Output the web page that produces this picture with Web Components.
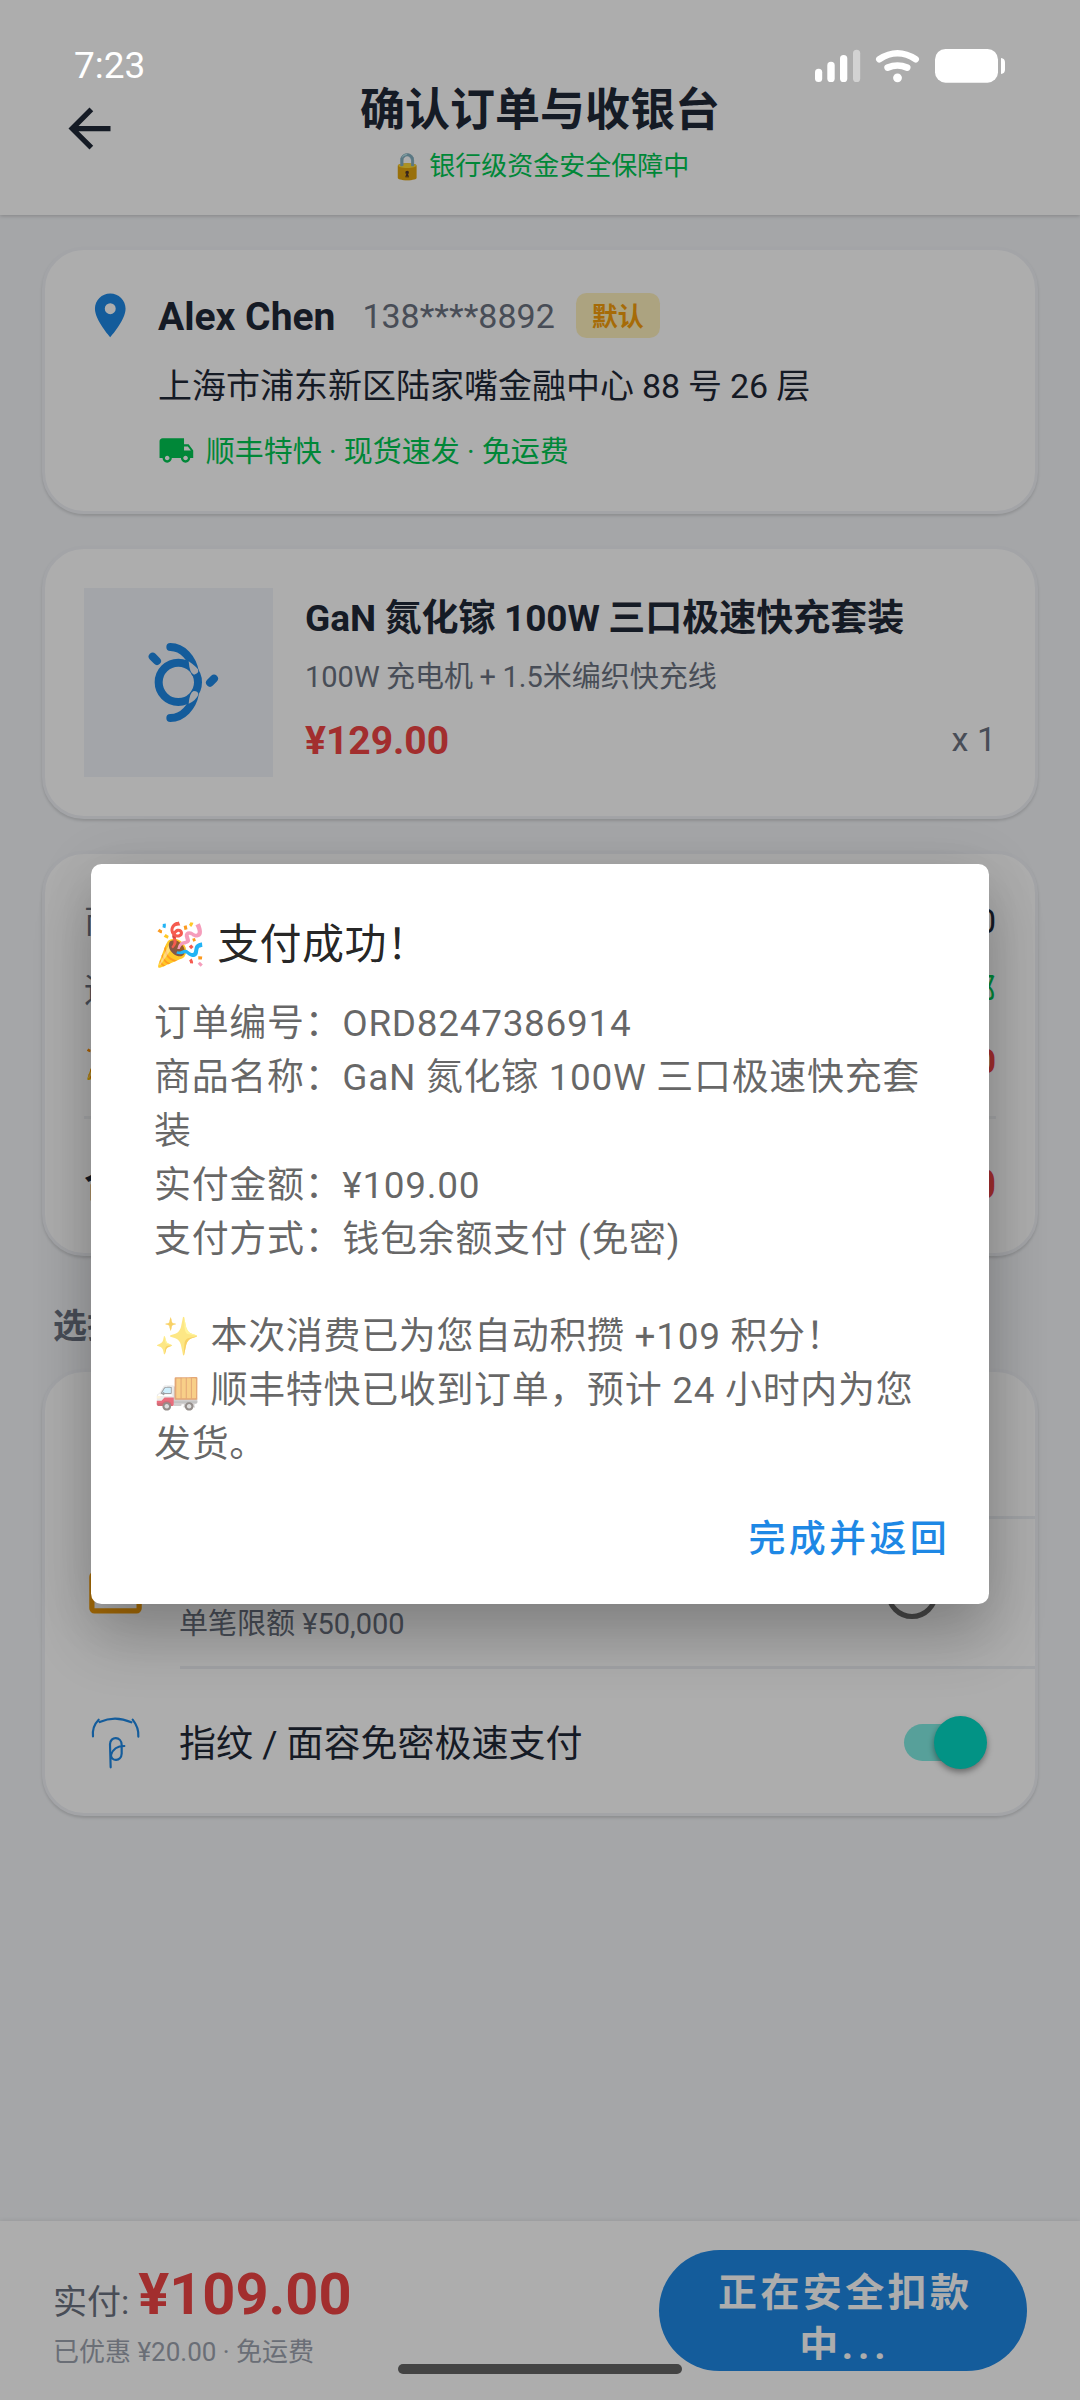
<!DOCTYPE html>
<html lang="zh-CN">
<head>
<meta charset="utf-8">
<title>确认订单与收银台</title>
<style>
html,body{margin:0;padding:0}
body{width:1080px;height:2400px;overflow:hidden;font-family:Roboto,"Noto Sans CJK SC",sans-serif;color:#1f2937}
</style>
</head>
<body>
<checkout-screen></checkout-screen>
<script>
const define=(name,html)=>{
  const t=document.createElement('template');
  t.innerHTML='<style>*{box-sizing:border-box}svg{display:block;flex:none}</style>'+html;
  customElements.define(name,class extends HTMLElement{
    constructor(){super();this.attachShadow({mode:'open'}).appendChild(t.content.cloneNode(true));}
  });
};

define('status-bar',`<style>:host{position:absolute;top:0;left:0;width:1080px;height:130px;display:flex;justify-content:space-between;padding:43px 74px 0 74px;color:#fff;z-index:5}
span{font-size:37px;line-height:44px;height:44px;margin-top:1px}svg{margin-top:3px}</style>
<span>7:23</span>
<svg width="192" height="40" viewBox="814 46 192 40" fill="#fff">
<rect x="815" y="68.7" width="7.2" height="13.3" rx="3.5"/><rect x="827.3" y="61.8" width="7.4" height="20.2" rx="3.6"/><rect x="840" y="55" width="7.3" height="27" rx="3.6"/><rect x="853" y="49.7" width="7.2" height="32.3" rx="3.6" opacity=".45"/>
<path d="M879.3 59.2Q897.5 47.3 915.7 59.2" fill="none" stroke="#fff" stroke-width="6.6" stroke-linecap="round"/>
<path d="M887.6 67.6Q897.5 63.4 907.2 67.6" fill="none" stroke="#fff" stroke-width="6.6" stroke-linecap="round"/>
<circle cx="897.5" cy="77.8" r="4.4"/>
<rect x="935" y="49" width="63" height="33.7" rx="10.5"/><path d="M1001 58q4 .4 4 4.5v7q0 4-4 4.5z"/></svg>`);

define('top-bar',`<style>:host{display:flex;width:1080px;height:215px;background:#fff;box-shadow:0 1px 4px rgba(0,0,0,.2);padding:0 58px;position:relative;align-items:flex-start}
svg{margin-top:97px}.t{flex:1;margin-right:63px;display:flex;flex-direction:column;align-items:center}
h1{margin:81px 0 0;font-size:45px;line-height:60px;font-weight:700}p{margin:8px 0 0;font-size:26px;line-height:34px;color:#00c853}</style>
<svg width="63" height="63" viewBox="0 0 24 24" fill="#1f2937"><path d="M20 11H7.83l5.59-5.59L12 4l-8 8 8 8 1.41-1.41L7.83 13H20v-2z"/></svg>
<div class="t"><h1>确认订单与收银台</h1><p>🔒 银行级资金安全保障中</p></div>`);

define('ui-card',`<style>:host{display:block;width:996px;border:3px solid #f0f2f7;border-radius:42px;background:#fff;box-shadow:0 2px 3px rgba(0,0,0,.14)}</style><slot></slot>`);

define('address-info',`<style>:host{display:flex;height:261px;padding:39px}.c{margin-left:21.5px}
.n{display:flex;height:53px;align-items:center}b{font-size:39px;line-height:50px;margin-top:3px}
.p{font-size:34px;line-height:44px;color:#6b7280;margin:1px 0 0 27px}
.k{margin-left:21px;height:45px;padding:0 16px;border-radius:10.5px;background:#fef0bd;color:#f59e0b;font-weight:700;font-size:26px;line-height:48px}
.a{margin-top:19px;font-size:34px;line-height:50px;word-spacing:-.5px}.s{margin-top:21px;height:40px;display:flex;gap:11px;font-size:29px;line-height:41px;color:#00c853}</style>
<svg width="52.5" height="52.5" viewBox="0 0 24 24" fill="#1e88e5"><path d="M12 2C8.13 2 5 5.13 5 9c0 5.25 7 13 7 13s7-7.75 7-13c0-3.87-3.13-7-7-7zm0 9.5a2.5 2.5 0 0 1 0-5 2.5 2.5 0 0 1 0 5z"/></svg>
<div class="c"><div class="n"><b>Alex Chen</b><span class="p">138****8892</span><span class="k">默认</span></div>
<div class="a">上海市浦东新区陆家嘴金融中心 88 号 26 层</div>
<div class="s"><svg width="36.75" height="36.75" viewBox="0 0 24 24" fill="#00c853"><path d="M20 8h-3V4H3c-1.1 0-2 .9-2 2v11h2c0 1.66 1.34 3 3 3s3-1.34 3-3h6c0 1.66 1.34 3 3 3s3-1.34 3-3h2v-5l-3-4zM6 18.5c-.83 0-1.5-.67-1.5-1.5s.67-1.5 1.5-1.5 1.5.67 1.5 1.5-.67 1.5-1.5 1.5zm13.5-9l1.96 2.5H17V9.5h2.500zm-1.500 9c-.83 0-1.500-.67-1.500-1.500s.67-1.500 1.500-1.500 1.500.67 1.500 1.500-.67 1.500-1.500 1.500z"/></svg><span>顺丰特快 · 现货速发 · 免运费</span></div></div>`);

define('product-info',`<style>:host{display:flex;height:267px;padding:39px}
.i{width:189px;height:189px;background:#f0f3f9;display:flex;align-items:center;justify-content:center}
.c{flex:1;margin-left:32px;display:flex;flex-direction:column}
b{font-size:37px;line-height:50px;margin-top:6px;word-spacing:-.8px}.s{font-size:29px;line-height:40px;margin-top:13px;color:#6b7280;word-spacing:-.7px}
.p{display:flex;justify-content:space-between;line-height:50px;margin-top:19px;font-size:39px;font-weight:700;color:#ef4444}.p span{font-size:34px;font-weight:400;color:#6b7280;margin-top:-2px}</style>
<div class="i"><svg width="110" height="105" viewBox="0 0 330 315" style="margin-left:13px">
<g fill="none" stroke="#1e88e5" stroke-width="24" stroke-linecap="round"><circle cx="145" cy="157" r="59"/><path d="M121 51C158 51 188 85 195 127M121 264C158 264 188 230 195 190"/><path d="M68 80L81 93M240 158L252 146"/></g>
<path d="M176 94Q196 108 204 118Q208 131 192 134Q179 132 176 94zM176 221Q198 211 205 194Q206 184 191 183Q179 187 176 221z" fill="#f0f3f9"/></svg></div>
<div class="c"><b>GaN 氮化镓 100W 三口极速快充套装</b><div class="s">100W 充电机 + 1.5米编织快充线</div><div class="p">¥129.00<span>x 1</span></div></div>`);

define('price-summary',`<style>:host{display:block;height:399px;padding:42px 39px 0}.r{display:flex;justify-content:space-between;font-size:34px;line-height:50px;color:#6b7280}
.r+.r{margin-top:19px}i{font-style:normal;color:#1f2937}.g{color:#00c853}.d{margin-top:21px!important;color:#f59e0b}.red{color:#ef4444;font-weight:700}
hr{height:3px;border:0;margin:30px 0 36px;background:#f0f2f5}.t{font-size:37px;line-height:60px;font-weight:700;color:#1f2937}.t .red{font-size:42px}</style>
<div class="r"><span>商品总额</span><i>¥129.00</i></div><div class="r"><span>运费</span><span class="g">包邮</span></div>
<div class="r d"><span>🎉 优惠</span><span class="red">-¥20.00</span></div><hr><div class="r t"><span>合计</span><span class="red">¥109.00</span></div>`);

define('pay-row',`<style>:host{display:flex;height:144px;padding:0 39px;align-items:center;font-size:37px;line-height:50px}
.m{flex:1;margin-left:32px}</style><slot name="icon"></slot><div class="m"><slot></slot></div><slot name="end"></slot>`);

define('toggle-switch',`<style>:host{display:block;width:92px;height:53px;margin-top:2px}.k{width:76px;height:37px;border-radius:19px;background:#81ece3;margin-top:8px;display:flex;align-items:center}
.b{flex:none;width:53px;height:53px;border-radius:50%;background:#03d9c4;margin-left:30px;box-shadow:0 3px 6px rgba(0,0,0,.4)}</style><div class="k"><div class="b"></div></div>`);

define('payment-methods',`<style>:host{display:block;height:441px}hr{border:0;height:3px;margin:0 0 0 135px;background:#eceff3}
.mid{height:147px}.sub{display:block;font-size:29px;line-height:40px;color:#6b7280;margin-top:63px}.one{display:block;padding-top:8px}
.radio{width:52.5px;height:52.5px;border:5.5px solid #6b6b6b;border-radius:50%;margin-right:58px}</style>
<pay-row><svg slot="icon" width="63" height="63" viewBox="0 0 24 24"></svg>钱包余额支付</pay-row><hr>
<pay-row class="mid"><svg slot="icon" width="63" height="63" viewBox="0 0 24 24" fill="none" stroke="#f59e0b" stroke-width="2"><rect x="3" y="5" width="18" height="14" rx="1"/><path d="M3 9.500h18"/></svg><span class="sub">单笔限额 ¥50,000</span><div slot="end" class="radio"></div></pay-row><hr>
<pay-row><svg slot="icon" width="63" height="63" viewBox="42 627 189 189" fill="none" stroke="#1e88e5" stroke-width="6.500" stroke-linecap="round"><path d="M69 706C67 687 73 669 86 656M89 663Q136 642 184 664M188 656Q207 680 205 707"/><path d="M122 799L120 730C120 705 155 705 155 732V758C154 782 123 782 123 762C128 745 139 735 163 735"/></svg><span class="one">指纹 / 面容免密极速支付</span><toggle-switch slot="end"></toggle-switch></pay-row>`);

define('pay-bar',`<style>:host{display:flex;justify-content:space-between;width:1080px;height:179px;background:#fff;box-shadow:0 -1px 4px rgba(0,0,0,.07);padding:29px 53px 0 53px;position:relative}
.l{display:flex;align-items:baseline;height:76px;margin-top:6px;line-height:76px;font-size:34px;color:#6b7280}b{font-size:57.75px;color:#ef4444;margin-left:9px}
p{margin:3px 0 0;font-size:26px;line-height:34px;color:#9ca3af}
.b{width:368px;height:121px;border-radius:61px;background:#1e88e5;padding:15px 55px 0}.x{height:95px;overflow:hidden;color:#fff;text-align:center;font-weight:700;font-size:39px;letter-spacing:3.4px;line-height:53px;padding:2px 0 0 4px;white-space:nowrap}i{font-style:normal;letter-spacing:5px}</style>
<div><div class="l">实付:<b>¥109.00</b></div><p>已优惠 ¥20.00 · 免运费</p></div><div class="b"><div class="x">正在安全扣款<br>中<i>...</i></div></div>`);

define('success-dialog',`<style>:host{position:absolute;left:91px;top:864px;width:898px;height:740px;border-radius:10.5px;background:#fff;padding:0 63px;box-shadow:0 36px 60px rgba(0,0,0,.19),0 6px 60px rgba(0,0,0,.12);z-index:3;display:block}
h2{margin:51px 0 0;font-size:42px;line-height:60px;letter-spacing:.4px;font-weight:400;color:rgba(0,0,0,.87)}
div{font-size:37px;letter-spacing:.66px;line-height:54px;color:rgba(0,0,0,.6);margin-top:22px;width:775px}
div+div{margin-top:43px}
.a{display:flex;justify-content:flex-end;margin:38px -24px 0 0}.a span{font-size:37px;letter-spacing:3.3px;line-height:60px;font-weight:500;color:#1e88e5}</style>
<h2>🎉 支付成功！</h2><div>订单编号：ORD8247386914<br>商品名称：GaN 氮化镓 100W 三口极速快充套装<br>实付金额：¥109.00<br>支付方式：钱包余额支付 (免密)</div>
<div>✨ 本次消费已为您自动积攒 +109 积分！<br>🚚 顺丰特快已收到订单，预计 24 小时内为您发货。</div>
<section class="a"><span>完成并返回</span></section>`);

define('checkout-screen',`<style>:host{display:flex;flex-direction:column;position:relative;width:1080px;height:2400px;background:#f3f5f8;overflow:hidden}
main{flex:1;padding:32px 42px 0;display:flex;flex-direction:column;gap:32px}
section h2{margin:13px 0 18px 11px;font-size:34px;line-height:50px;color:#6b7280}
.scrim{position:absolute;inset:0;background:rgba(0,0,0,.32);z-index:2}.home{position:absolute;left:398px;top:2364px;width:284px;height:10px;border-radius:5px;background:#444;z-index:5}</style>
<top-bar></top-bar><main><ui-card><address-info></address-info></ui-card><ui-card><product-info></product-info></ui-card><ui-card><price-summary></price-summary></ui-card>
<section><h2>选择支付方式</h2><ui-card><payment-methods></payment-methods></ui-card></section></main><pay-bar></pay-bar>
<div class="scrim"></div><success-dialog></success-dialog><status-bar></status-bar><div class="home"></div>`);
</script>
</body>
</html>
